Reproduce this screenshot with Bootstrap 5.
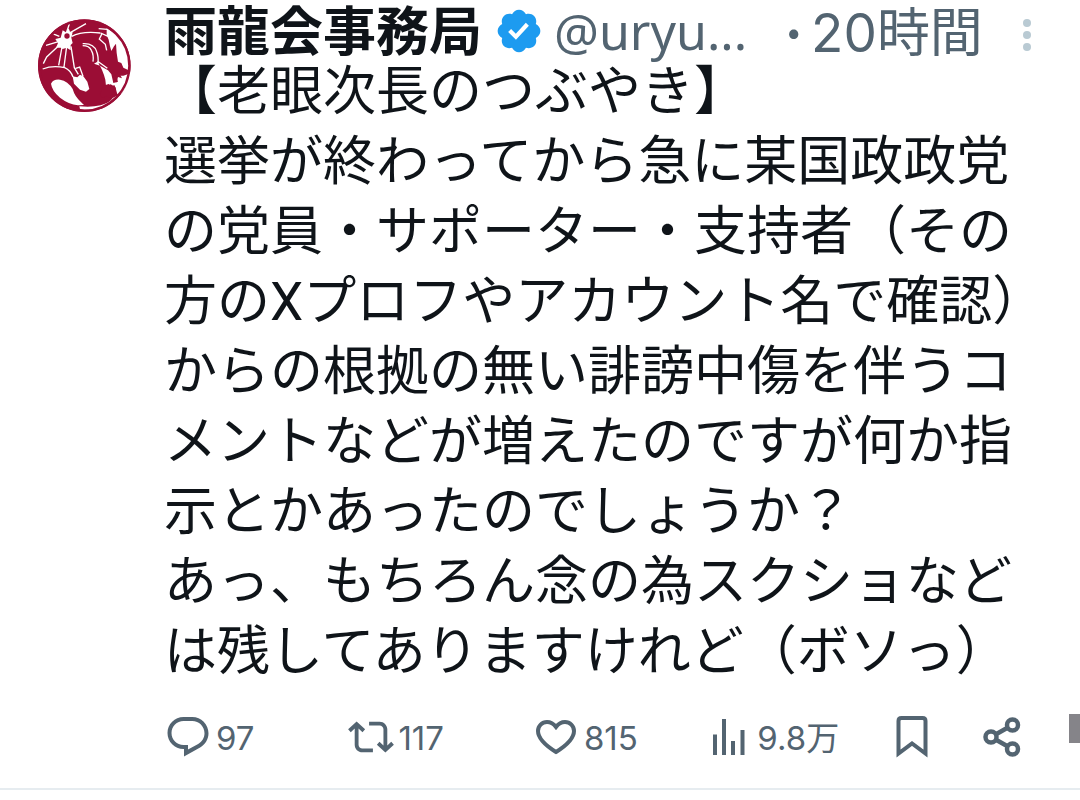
<!DOCTYPE html>
<html lang="ja">
<head>
<meta charset="utf-8">
<meta name="viewport" content="width=device-width, initial-scale=1">
<title>雨龍会事務局</title>
<link href="https://cdn.jsdelivr.net/npm/bootstrap@5.3.0/dist/css/bootstrap.min.css" rel="stylesheet">
<style>
body{font-family:"Noto Sans CJK JP",sans-serif;color:#0f1419;background:#fff}
.post{padding:0 59px 28px 37px;border-bottom:2px solid #e6ecf0}
.post-main{min-width:0}
.avatar{width:95px;margin:18px 32px 0 0}
.avatar svg,.actions svg,.verified{display:block;flex:none}
.post-head{height:52px;padding-top:3px;line-height:50px;font-size:50px;color:#536471}
.display-name{color:#0f1419;font-size:53px;font-weight:700;text-decoration:none}
.verified{margin:7px 10px 0 12px}
.handle{font-family:"Noto Sans",sans-serif;color:inherit;text-decoration:none}
.sep{font-weight:700;margin-left:32px;width:32px}
.handle,.sep,.posted{margin-top:7px}
.posted{font-size:53px}
.digits{font-family:Inter,sans-serif}
.latin{font-family:Roboto,sans-serif;line-height:1}
.post-text{font-size:53px;line-height:70px;margin:0;white-space:nowrap;text-spacing-trim:space-all}
.actions{display:grid;grid-template-columns:184fr 187fr 177fr 182fr 87fr 38px;height:48px;margin-top:30px}
.actions button{border:0;padding:0;background:none;color:#536471;display:flex;align-items:center;font:400 33px/48px Inter,"Noto Sans CJK JP",sans-serif;white-space:nowrap}
.actions span{margin-top:2px}
.more{border:0;padding:0;background:none;margin:14px -10px 0 0}
.scroll-thumb{position:absolute;right:0;top:714px;width:11px;height:29px;background:#858489}
</style>
</head>
<body>
<article class="post d-flex position-relative">
  <a class="avatar flex-shrink-0" href="#" aria-label="雨龍会事務局">
    <svg width="95" height="95" viewBox="51 53 285 285">
      <circle cx="193" cy="196" r="139" fill="#9b0d35"/>
      <g fill="#fff">
        <path d="M128 90l10 6 8-12 4 10 8 2-4 16 4 16-6 6 0 16-12-8-12 4-6-4-14 0 6-14-8-12 16-4z"/>
        <path d="M260 84q46 24 62 68 8 30 4 58l-16-8-6-14-10-4-4-26-2-28-6 8-8 14-4-14-4-20-6-14z"/>
        <path d="M222 190l18 6 24 14 10 12 6 26 14-4-6-18 22 0 24-8q-6 34-30 62l-12 2-6-22-14-8-14 4-2-18q-8-32-24-54z"/>
        <path d="M93 250q7-14 27-12 24 4 38 28 6 22 24 38l10 10-18 1q-28-3-54-23-24-20-27-42z"/>
        <path d="M158 228l14 3 8-8 10 5 12 16 6 22-10 8-18-6-18-18z"/>
        <path d="M178 318q36 4 64-3 28-8 36-22l16-8q-22 28-50 38-32 10-64 3z"/>
      </g>
      <circle cx="141" cy="107" r="8" fill="#9b0d35"/>
      <g fill="none" stroke="#fff" stroke-width="4">
        <path d="M152 96l46-26M140 95l8-24M118 108l-20-8M118 123l-40 12M112 140l-32 30-10 20M126 140l-10 55M140 138l-8 62M153 138l10 64 12 20M68 206q30-12 66-4 18 8 25 28M155 108q30-16 86-10M167 204l12-4 10 28M236 85l26 2M242 98l22 10"/>
        <path d="M188 130q34-2 42 24 6 14 4 36M188 136q20 0 26 14 8 14 5 34M246 100l-8 16 18 16 4 18M232 182l30 22"/>
      </g>
      <g fill="#9b0d35">
        <path d="M250 256l16-5 8 8 9-5 5 13-7 5 8 12-12-2-7 10-10-6-13 8-8-12z"/>
        <path d="M296 214l10 20-12-4-4 16-8-2-2-14z"/>
      </g>
      <circle cx="193" cy="196" r="135" fill="none" stroke="#9b0d35" stroke-width="7"/>
    </svg>
  </a>
  <div class="post-main flex-grow-1">
    <header class="post-head d-flex align-items-center text-nowrap">
      <a class="display-name" href="#">雨龍会事務局</a>
      <svg class="verified" width="50" height="50" viewBox="0 0 24 24" aria-label="認証済み"><path fill="#1d9bf0" d="M22.25 12c0-1.43-.88-2.67-2.19-3.34.46-1.39.2-2.9-.81-3.91s-2.52-1.27-3.91-.81c-.66-1.31-1.91-2.19-3.34-2.19s-2.67.88-3.33 2.19c-1.4-.46-2.91-.2-3.92.81s-1.26 2.52-.8 3.91c-1.31.67-2.2 1.91-2.2 3.34s.89 2.67 2.2 3.34c-.46 1.39-.21 2.9.8 3.91s2.52 1.26 3.91.81c.67 1.31 1.91 2.19 3.34 2.19s2.68-.88 3.34-2.19c1.39.45 2.9.2 3.91-.81s1.27-2.52.81-3.91c1.31-.67 2.19-1.91 2.19-3.34z"/><path fill="#fff" d="M10.54 16.2L6.8 12.46l1.41-1.42 2.26 2.26 4.8-5.23 1.47 1.36z"/></svg>
      <a class="handle" href="#">@uryu...</a>
      <span class="sep">·</span>
      <time class="posted"><span class="digits">20</span>時間</time>
      <button class="more ms-auto" type="button" aria-label="もっと見る"><svg class="d-block" width="8" height="34" fill="#b9cad3"><circle cx="4" cy="5" r="4"/><circle cx="4" cy="17" r="4"/><circle cx="4" cy="29" r="4"/></svg></button>
    </header>
    <p class="post-text">【老眼次長のつぶやき】<br>選挙が終わってから急に某国政政党<br>の党員・サポーター・支持者（その<br>方の<span class="latin">X</span>プロフやアカウント名で確認）<br>からの根拠の無い誹謗中傷を伴うコ<br>メントなどが増えたのですが何か指<br>示とかあったのでしょうか？<br>あっ、もちろん念の為スクショなど<br>は残してありますけれど（ボソっ）</p>
    <div class="actions">
      <button type="button" aria-label="返信 97"><svg class="me-1" width="48" height="48" viewBox="0 0 24 24" fill="currentColor"><path d="M1.751 10c0-4.42 3.584-8 8.005-8h4.366c4.49 0 8.129 3.64 8.129 8.13 0 2.96-1.607 5.68-4.196 7.11l-8.054 4.46v-3.69h-.067c-4.49.1-8.183-3.51-8.183-8.01zm8.005-6c-3.317 0-6.005 2.69-6.005 6 0 3.37 2.77 6.08 6.138 6.01l.351-.01h1.761v2.3l5.087-2.81c1.951-1.08 3.163-3.13 3.163-5.36 0-3.39-2.744-6.13-6.129-6.13H9.756z"/></svg><span>97</span></button>
      <button type="button" aria-label="リポスト 117"><svg class="me-1" width="46" height="46" viewBox="0 0 24 24" fill="currentColor"><path d="M4.5 3.88l4.432 4.14-1.364 1.46L5.5 7.55V16c0 1.1.896 2 2 2H13v2H7.5c-2.209 0-4-1.79-4-4V7.55L1.432 9.48.068 8.02 4.5 3.88zM16.5 6H11V4h5.5c2.209 0 4 1.79 4 4v8.45l2.068-1.93 1.364 1.46-4.432 4.14-4.432-4.14 1.364-1.46 2.068 1.93V8c0-1.1-.896-2-2-2z"/></svg><span>117</span></button>
      <button type="button" aria-label="いいね 815"><svg class="me-2" width="40" height="36" viewBox="0 0 40 36" fill="none" stroke="currentColor" stroke-width="4"><path d="M20 8C17 4 14 3 11 3C6 3 2 7 2 12C2 21 12 28 20 33C28 28 38 21 38 12C38 7 34 3 29 3C26 3 23 4 20 8Z"/></svg><span>815</span></button>
      <button type="button" aria-label="表示 9.8万"><svg class="me-2" width="36" height="36" viewBox="0 0 36 36" fill="currentColor"><path d="M0 15.500h4V36H0zM9 0h4v36H9zM18 22h4v14h-4zM27.500 11h4v25h-4z"/></svg><span>9.8万</span></button>
      <button type="button" aria-label="ブックマーク"><svg width="32" height="42" viewBox="0 0 32 42" fill="none" stroke="currentColor" stroke-width="4"><path d="M2.500 37.500V5c0-2 1-3 3-3h21c2 0 3 1 3 3v32.500L16 27.500Z"/></svg></button>
      <button type="button" aria-label="共有"><svg width="38" height="40" viewBox="0 0 38 40" fill="none" stroke="currentColor" stroke-width="4.500"><circle cx="8" cy="20" r="5.500"/><circle cx="29.500" cy="8" r="5.500"/><circle cx="29.500" cy="32" r="5.500"/><path d="M13 17.300l11.500-6.500M13 22.700l11.500 6.500"/></svg></button>
    </div>
  </div>
  <div class="scroll-thumb"></div>
</article>
<script src="https://cdn.jsdelivr.net/npm/bootstrap@5.3.0/dist/js/bootstrap.bundle.min.js"></script>
</body>
</html>
